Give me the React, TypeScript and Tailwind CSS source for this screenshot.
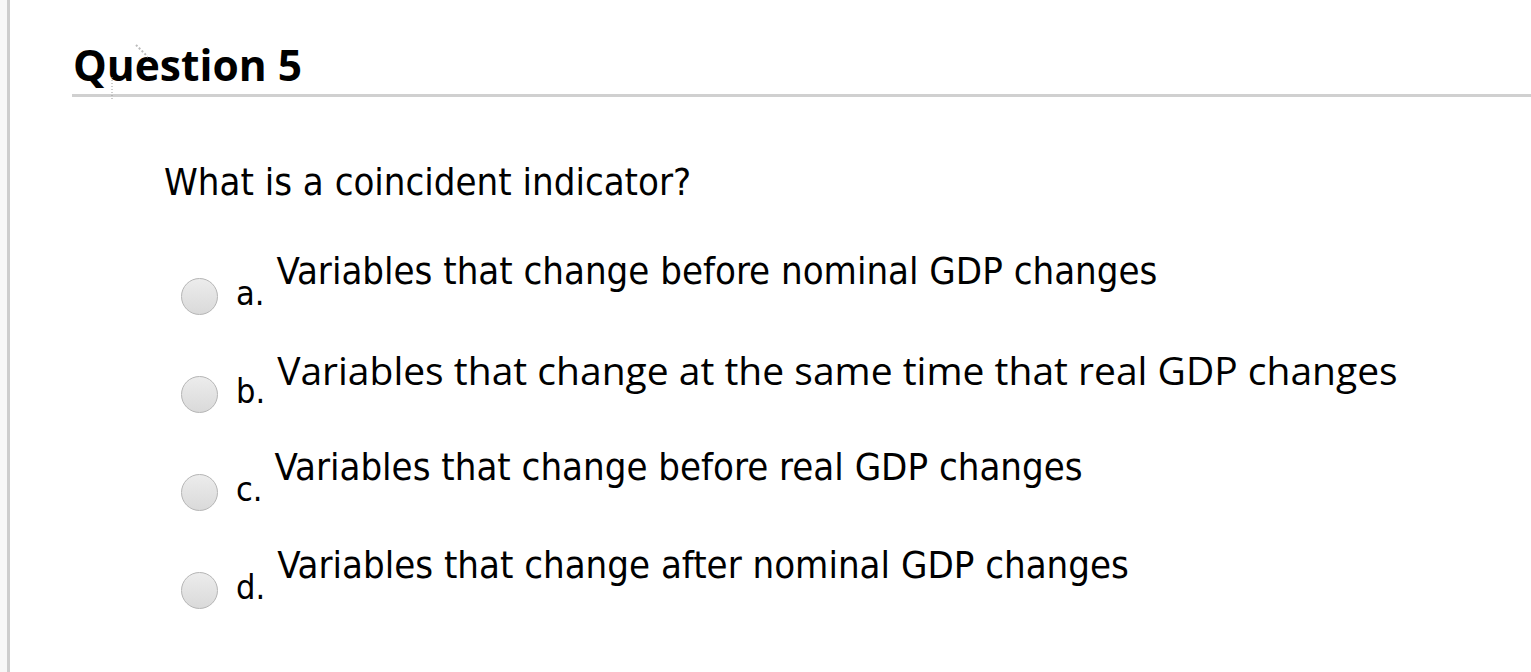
const options = [
  { letter: "a.", text: "Variables that change before nominal GDP changes", font: "tahoma" },
  { letter: "b.", text: "Variables that change at the same time that real GDP changes", font: "open" },
  { letter: "c.", text: "Variables that change before real GDP changes", font: "tahoma" },
  { letter: "d.", text: "Variables that change after nominal GDP changes", font: "tahoma" },
];

const Radio = () => (
  <span className="block w-[37px] h-[37px] shrink-0 rounded-full border border-[#b5b5b5] bg-gradient-to-b from-[#ececec] to-[#dadada]" />
);

export default function App() {
  return (
    <div className="flex min-h-[672px] w-[1531px] bg-white text-black">
      <div className="w-[10px] bg-[#f7f7f7] border-r-[3px] border-[#cdcdcd]" />
      <div className="flex-1 pl-[62px] pt-[37px]">
        <div className="relative border-b-[3px] border-[#d0d0d0] pb-[1px] pl-[1px]">
          <h2 className="text-[42.5px] leading-[56px] font-bold font-['Open_Sans',sans-serif]">
            Question 5
          </h2>
          <svg className="absolute left-[36px] top-[4px]" width="40" height="60" viewBox="0 0 40 60">
            <line x1="28" y1="4" x2="40" y2="16" stroke="#bbb" strokeWidth="2" strokeDasharray="2 2" />
            <line x1="4" y1="36" x2="4" y2="58" stroke="#999" strokeWidth="1" strokeDasharray="1 2" />
          </svg>
        </div>
        <div className="pl-[92px] pt-[61px] font-['DejaVu_Sans_Condensed','DejaVu_Sans',sans-serif]">
          <p className="text-[38px] leading-[48px]">What is a coincident indicator?</p>
          <div className="flex flex-col gap-[33px] pl-[17px] pt-[42px]">
            {options.map((o) => (
              <div key={o.letter} className="flex items-start h-[65px]">
                <div className="pt-[30px]">
                  <Radio />
                </div>
                <span className="pl-[18px] pt-[25px] text-[34px] leading-[40px]">{o.letter}</span>
                <span
                  className={
                    o.font === "open"
                      ? "pl-[12px] pt-[1px] text-[39px] leading-[46px] font-['Open_Sans',sans-serif]"
                      : "pl-[12px] pt-[0px] text-[38px] leading-[46px]"
                  }
                >
                  {o.text}
                </span>
              </div>
            ))}
          </div>
        </div>
      </div>
    </div>
  );
}
